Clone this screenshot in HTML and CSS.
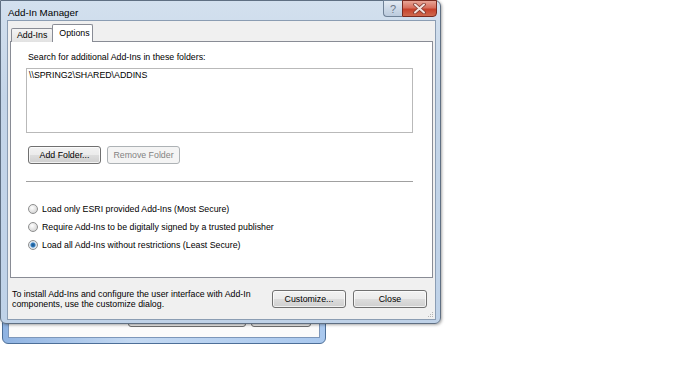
FILE: index.html
```html
<!DOCTYPE html>
<html lang="en">
<head>
  <meta charset="UTF-8">
  <title>Add-In Manager</title>
  <link rel="stylesheet" href="styles.css">
</head>
<body>
  <div class="window back">
    <div class="back-client">
      <span class="back-btn wide"></span>
      <span class="back-btn narrow"></span>
    </div>
  </div>

  <div class="window dialog">
    <div class="titlebar">
      <span class="title">Add-In Manager</span>
      <div class="caption-btns">
        <span class="cap help">?</span>
        <span class="cap close">
          <svg width="13" height="11" viewBox="0 0 13 11">
            <path d="M2 1.5 L11 9.5 M11 1.5 L2 9.5" stroke="#7d3a30" stroke-width="3.6" stroke-linecap="round"/>
            <path d="M2 1.5 L11 9.5 M11 1.5 L2 9.5" stroke="#f3e3df" stroke-width="2" stroke-linecap="round"/>
          </svg>
        </span>
      </div>
    </div>

    <div class="client">
      <div class="tabs">
        <span class="tab">Add-Ins</span>
        <span class="tab active">Options</span>
      </div>

      <div class="panel">
        <p class="label">Search for additional Add-Ins in these folders:</p>
        <div class="listbox">\\SPRING2\SHARED\ADDINS</div>
        <div class="btn-row">
          <button class="btn">Add Folder...</button>
          <button class="btn" disabled>Remove Folder</button>
        </div>
        <div class="sep"></div>
        <div class="radios">
          <label class="radio"><span class="dot"></span>Load only ESRI provided Add-Ins (Most Secure)</label>
          <label class="radio"><span class="dot"></span>Require Add-Ins to be digitally signed by a trusted publisher</label>
          <label class="radio"><span class="dot checked"></span>Load all Add-Ins without restrictions (Least Secure)</label>
        </div>
      </div>

      <div class="footer">
        <p class="hint">To install Add-Ins and configure the user interface with Add-In<br>components, use the customize dialog.</p>
        <button class="btn wide">Customize...</button>
        <button class="btn wide">Close</button>
      </div>

      <svg class="grip" width="7" height="7" viewBox="0 0 7 7">
        <rect x="5" y="1" width="1" height="1" fill="#b5b5b5"/>
        <rect x="3" y="3" width="1" height="1" fill="#b5b5b5"/>
        <rect x="5" y="3" width="1" height="1" fill="#b5b5b5"/>
        <rect x="1" y="5" width="1" height="1" fill="#b5b5b5"/>
        <rect x="3" y="5" width="1" height="1" fill="#b5b5b5"/>
        <rect x="5" y="5" width="1" height="1" fill="#b5b5b5"/>
      </svg>
    </div>
  </div>
</body>
</html>
```

FILE: styles.css
```css
* {
  box-sizing: border-box;
}
body {
  margin: 0;
  width: 683px;
  height: 384px;
  overflow: hidden;
  position: relative;
  background: #fff;
  font-family: 'Liberation Sans', Arial, sans-serif;
  font-size: 8.8px;
  color: #000;
}
p {
  margin: 0;
}

/* windows on the desktop */
.window {
  position: absolute;
}
.back {
  left: 2px;
  top: 224px;
  width: 324px;
  height: 120px;
  padding: 0 5px 5px 5px;
  border: 1px solid #4d6f98;
  border-radius: 0 0 6px 6px;
  background: linear-gradient(90deg, #8fb3e2, #c4d9f2 40%, #a9c8ee);
  display: flex;
}
.back-client {
  flex: 1;
  background: #fbfbfb;
  border: 1px solid #7d97ba;
  display: flex;
  align-items: flex-end;
  gap: 5px;
  padding: 0 0 10px 119px;
}
.back-btn {
  height: 20px;
  border: 1px solid #707070;
  border-radius: 3px;
  background: #ececec;
}
.back-btn.wide { width: 118px; }
.back-btn.narrow { width: 60px; }

.dialog {
  left: 0;
  top: 0;
  width: 441px;
  height: 324px;
  padding: 0 4px 3px 6px;
  border: 1px solid #5f6f82;
  border-radius: 0 6px 6px 6px;
  background: linear-gradient(#d3e0ee, #c4d5e8 30%, #bfd2e8);
  box-shadow: 1px 1px 3px rgba(0, 0, 0, 0.35);
  display: flex;
  flex-direction: column;
}

/* title bar */
.titlebar {
  height: 19px;
  display: flex;
  align-items: flex-start;
}
.title {
  padding: 6px 0 0 1px;
  font-size: 9.8px;
  line-height: 12px;
}
.caption-btns {
  margin: -1px -1px 0 auto;
  display: flex;
}
.cap {
  height: 17px;
  display: flex;
  align-items: center;
  justify-content: center;
}
.help {
  width: 19px;
  border: 1px solid #6f8196;
  border-right: none;
  border-radius: 0 0 0 4px;
  background: linear-gradient(#e4ebf3, #cdd9e7 50%, #bccbdd);
  color: #6b7787;
  font-size: 11px;
}
.close {
  width: 35px;
  border: 1px solid #7a2a1f;
  border-radius: 0 0 4px 0;
  background: linear-gradient(#e8a596, #d7705e 45%, #c6412b 55%, #cf6a4f);
}

/* client area */
.client {
  flex: 1;
  position: relative;
  background: #f0f0f0;
  border: 1px solid #8b9db3;
  padding: 3px 2px 0;
  display: flex;
  flex-direction: column;
}
.tabs {
  height: 18px;
  padding-left: 1px;
  display: flex;
  align-items: flex-end;
}
.tab {
  position: relative;
  height: 14px;
  padding: 0 5px;
  margin-right: -1px;
  border: 1px solid #898c95;
  border-bottom: none;
  border-radius: 2px 2px 0 0;
  background: linear-gradient(#f4f4f4, #e2e2e2);
  line-height: 13px;
}
.tab.active {
  z-index: 1;
  height: 18px;
  width: 41px;
  padding: 0 6px;
  background: #fff;
  line-height: 16px;
}

.panel {
  height: 237px;
  margin-top: -1px;
  padding: 0 19px 0 15px;
  background: #fff;
  border: 1px solid #898c95;
}
.label {
  margin: 10px 0 5px 2px;
  line-height: 11px;
}
.listbox {
  height: 65px;
  padding: 1px 2px;
  border: 1px solid #b9b9b9;
  line-height: 11px;
}
.btn-row {
  margin-top: 13px;
  padding-left: 2px;
  display: flex;
  gap: 6px;
}
.btn {
  width: 73px;
  height: 18px;
  padding: 0;
  border: 1px solid #707070;
  border-radius: 3px;
  background: linear-gradient(#f2f2f2, #ebebeb 50%, #dddddd 50%, #cfcfcf);
  box-shadow: inset 0 0 0 1px rgba(255, 255, 255, 0.7);
  font-family: inherit;
  font-size: 8.8px;
  color: #000;
}
.btn:disabled {
  border-color: #adb2b5;
  background: #f4f4f4;
  box-shadow: none;
  color: #838383;
}
.sep {
  margin-top: 17px;
  border-top: 1px solid #a0a0a0;
}
.radios {
  margin-top: 18px;
  padding-left: 2px;
}
.radio {
  height: 18px;
  display: flex;
  align-items: center;
  gap: 4px;
}
.dot {
  width: 10px;
  height: 10px;
  border: 1px solid #8e8f8f;
  border-radius: 50%;
  background: radial-gradient(circle at 40% 35%, #ffffff, #d9d9d9 70%, #c4c4c4);
}
.dot.checked {
  background: radial-gradient(circle, #1c5180 0, #2f7bc0 2px, #d9e6f2 3px, #e6e6e6 5px);
}

.footer {
  flex: 1;
  padding: 12px 6px 0 2px;
  display: flex;
  align-items: flex-start;
  gap: 7px;
}
.hint {
  flex: 1;
  margin-top: -1px;
  line-height: 10px;
}
.btn.wide {
  width: 74px;
}
.grip {
  position: absolute;
  right: 1px;
  bottom: 1px;
}
```
